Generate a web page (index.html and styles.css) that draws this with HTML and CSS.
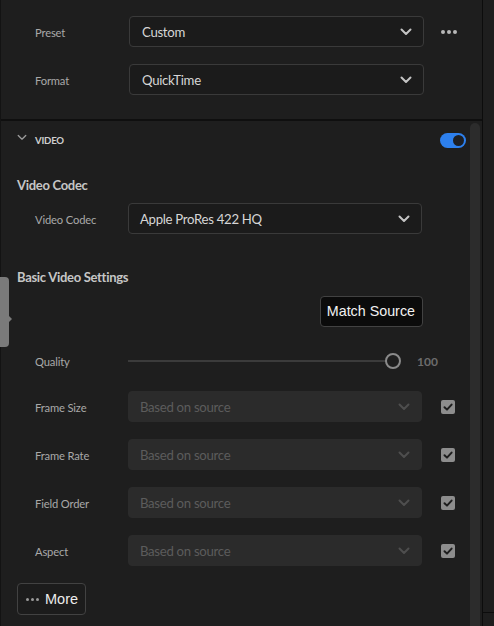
FILE: index.html
```html
<!DOCTYPE html>
<html>
<head>
<meta charset="utf-8">
<link rel="stylesheet" href="styles.css">
</head>
<body>
<div class="app">
  <div class="panel">
    <div class="top">
      <div class="row">
        <span class="label top-label">Preset</span>
        <div class="select top-select"><span>Custom</span>
          <svg class="chev" viewBox="0 0 12 8"><path d="M1.5 1.5 L6 6 L10.5 1.5"/></svg></div>
        <div class="dots"><i></i><i></i><i></i></div>
      </div>
      <div class="row">
        <span class="label top-label">Format</span>
        <div class="select top-select"><span>QuickTime</span>
          <svg class="chev" viewBox="0 0 12 8"><path d="M1.5 1.5 L6 6 L10.5 1.5"/></svg></div>
      </div>
    </div>
    <div class="lower">
      <div class="content">
        <div class="sec-head">
          <svg class="sec-chev" viewBox="0 0 12 8"><path d="M1.5 1.5 L6 6 L10.5 1.5"/></svg>
          <span class="sec-title">VIDEO</span>
          <span class="toggle"><i></i></span>
        </div>
        <div class="heading h-codec">Video Codec</div>
        <div class="row r-codec">
          <span class="label">Video Codec</span>
          <div class="select"><span>Apple ProRes 422 HQ</span>
            <svg class="chev" viewBox="0 0 12 8"><path d="M1.5 1.5 L6 6 L10.5 1.5"/></svg></div>
        </div>
        <div class="heading h-basic">Basic Video Settings</div>
        <div class="match-row"><span class="match">Match Source</span></div>
        <div class="row r-quality">
          <span class="label">Quality</span>
          <div class="slider"><span class="track"></span><span class="thumb"></span></div>
          <span class="qval">100</span>
        </div>
        <div class="row r-first">
          <span class="label">Frame Size</span>
          <div class="select disabled"><span>Based on source</span>
            <svg class="chev" viewBox="0 0 12 8"><path d="M1.5 1.5 L6 6 L10.5 1.5"/></svg></div>
          <span class="check"><svg viewBox="0 0 14 14"><path d="M3.5 7.2 L6 9.6 L10.6 4.6"/></svg></span>
        </div>
        <div class="row r-next">
          <span class="label">Frame Rate</span>
          <div class="select disabled"><span>Based on source</span>
            <svg class="chev" viewBox="0 0 12 8"><path d="M1.5 1.5 L6 6 L10.5 1.5"/></svg></div>
          <span class="check"><svg viewBox="0 0 14 14"><path d="M3.5 7.2 L6 9.6 L10.6 4.6"/></svg></span>
        </div>
        <div class="row r-next">
          <span class="label">Field Order</span>
          <div class="select disabled"><span>Based on source</span>
            <svg class="chev" viewBox="0 0 12 8"><path d="M1.5 1.5 L6 6 L10.5 1.5"/></svg></div>
          <span class="check"><svg viewBox="0 0 14 14"><path d="M3.5 7.2 L6 9.6 L10.6 4.6"/></svg></span>
        </div>
        <div class="row r-next">
          <span class="label">Aspect</span>
          <div class="select disabled"><span>Based on source</span>
            <svg class="chev" viewBox="0 0 12 8"><path d="M1.5 1.5 L6 6 L10.5 1.5"/></svg></div>
          <span class="check"><svg viewBox="0 0 14 14"><path d="M3.5 7.2 L6 9.6 L10.6 4.6"/></svg></span>
        </div>
        <div class="more"><span class="mdots"><i></i><i></i><i></i></span>More</div>
      </div>
      <div class="scrollbar"></div>
    </div>
    <div class="side-tab"></div>
  </div>
  <div class="strip"><div class="strip-line"></div></div>
</div>
</body>
</html>
```
FILE: styles.css
```css
* { box-sizing: border-box; }
html, body { margin: 0; padding: 0; }
body {
  background: #1e1e1e;
  font-family: Lato, "Open Sans", sans-serif;
  color: #d0d0d0;
  width: 494px;
  height: 626px;
  overflow: hidden;
}
.app { display: flex; height: 626px; }
.panel {
  position: relative;
  width: 483px;
  height: 626px;
  border-left: 1px solid #131313;
  border-right: 1px solid #0c0c0c;
  display: flex;
  flex-direction: column;
}
.strip { flex: 1; position: relative; background: #1e1e1e; }
.strip-line { margin-top: 612px; border-top: 1px solid #0c0c0c; }

.top {
  padding: 16px 0 24px 0;
  border-bottom: 2px solid #0f0f0f;
  display: flex;
  flex-direction: column;
  gap: 17px;
}
.row { display: flex; align-items: center; height: 31px; padding-left: 34px; }
.label { font-size: 11.2px; letter-spacing: -0.15px; color: #a9a9a9; width: 93px; flex: none; padding-top: 2px; }
.top-label { width: 94px; }
.select {
  width: 294px;
  height: 31px;
  flex: none;
  border: 1px solid #3a3a3a;
  border-radius: 4px;
  background: #1b1b1b;
  display: flex;
  align-items: center;
  justify-content: space-between;
  padding: 0 11px 0 11px;
  font-size: 13.2px;
  letter-spacing: -0.3px;
  color: #d6d6d6;
}
.top-select { width: 295px; padding-left: 12px; }
.chev { width: 12px; height: 8px; }
.chev path, .sec-chev path { fill: none; stroke: #c4c4c4; stroke-width: 2; stroke-linecap: round; stroke-linejoin: round; }
.dots { display: flex; gap: 2px; margin-left: 17px; }
.dots i, .mdots i { display: block; width: 4px; height: 4px; border-radius: 50%; background: #b8b8b8; }

.lower { flex: 1; display: flex; }
.content { width: 469px; flex: none; display: flex; flex-direction: column; }
.scrollbar {
  width: 10px;
  margin-top: 2px;
  background: #2c2c2c;
  border-radius: 5px 5px 0 0;
}
.sec-head { height: 38px; display: flex; align-items: center; padding-left: 16px; }
.sec-chev { width: 10px; height: 7px; margin-right: 8px; margin-top: -6px; }
.sec-chev path { stroke: #9a9a9a; stroke-width: 1.6; }
.sec-title { font-size: 9.6px; font-weight: 700; color: #cfcfcf; letter-spacing: -0.2px; padding-top: 1px; }
.toggle {
  margin-left: auto;
  margin-right: 4px;
  width: 26px;
  height: 15px;
  border-radius: 8px;
  background: #2d80ee;
  position: relative;
}
.toggle i {
  position: absolute;
  right: 2px;
  top: 2px;
  width: 11px;
  height: 11px;
  border-radius: 50%;
  background: #1d1f24;
}
.heading { font-size: 13px; letter-spacing: -0.3px; font-weight: 700; color: #c6c6c6; padding-left: 16px; height: 20px; line-height: 20px; }
.h-codec { margin-top: 16px; }
.r-codec { margin-top: 8px; }
.h-basic { margin-top: 33px; }
.match-row { display: flex; justify-content: flex-end; padding-right: 47px; margin-top: 9px; }
.match {
  height: 31px;
  line-height: 29px;
  padding: 0 7px 0 6px;
  background: #0b0b0b;
  border: 1px solid #424242;
  border-radius: 4px;
  font-family: "Liberation Sans", Arial, sans-serif;
  font-size: 14.3px;
  color: #f2f2f2;
}
.r-quality { margin-top: 18px; }
.slider { width: 273px; flex: none; position: relative; height: 18px; }
.track { position: absolute; left: 0; right: 8px; top: 8px; height: 2px; background: #3b3b3b; }
.thumb {
  position: absolute;
  right: 0;
  top: 1px;
  width: 16px;
  height: 16px;
  border-radius: 50%;
  border: 2px solid #8a8a8a;
  background: #1e1e1e;
}
.qval { margin-left: 16px; font-size: 12px; font-weight: 700; color: #6c6c6c; padding-top: 1px; }
.r-first { margin-top: 15px; }
.r-next { margin-top: 17px; }
.select.disabled { background: #2b2b2b; border-color: #2b2b2b; color: #5c5c5c; }
.select.disabled .chev path { stroke: #4e4e4e; }
.check {
  margin-left: 19px;
  width: 14px;
  height: 14px;
  border-radius: 2px;
  background: #8d8d8d;
  display: block;
}
.check svg { width: 14px; height: 14px; display: block; }
.check path { fill: none; stroke: #1e1e1e; stroke-width: 2; stroke-linecap: round; stroke-linejoin: round; }
.more {
  margin-top: 17px;
  margin-left: 16px;
  width: 69px;
  height: 32px;
  border: 1px solid #424242;
  border-radius: 4px;
  display: flex;
  align-items: center;
  gap: 6px;
  padding-left: 8px;
  font-family: "Liberation Sans", Arial, sans-serif;
  font-size: 14.5px;
  color: #ececec;
  background: #1c1c1c;
}
.mdots { display: flex; gap: 2px; }
.mdots i { width: 3px; height: 3px; background: #9a9a9a; }

.side-tab {
  position: absolute;
  left: -1px;
  top: 277px;
  width: 9px;
  height: 70px;
  background: #7a7a7a;
  border-radius: 0 4px 4px 0;
}
.side-tab::after {
  content: "";
  position: absolute;
  right: -3px;
  top: 39px;
  border-left: 3px solid #7a7a7a;
  border-top: 3px solid transparent;
  border-bottom: 3px solid transparent;
}
```
